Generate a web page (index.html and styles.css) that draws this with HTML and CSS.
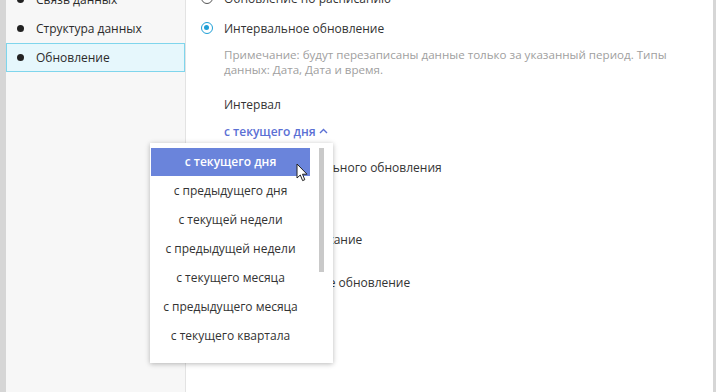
FILE: index.html
```html
<!DOCTYPE html>
<html lang="ru">
<head>
  <meta charset="UTF-8">
  <title>Обновление</title>
  <link rel="stylesheet" href="styles.css">
</head>
<body>
  <div class="frame">
    <div class="edge-left"></div>
    <aside class="sidebar">
      <ul class="nav">
        <li class="nav-item"><span class="dot"></span>Связь данных</li>
        <li class="nav-item"><span class="dot"></span>Структура данных</li>
        <li class="nav-item active"><span class="dot"></span>Обновление</li>
      </ul>
    </aside>
    <main class="content">
      <div class="radio-row"><span class="radio"></span>Обновление по расписанию</div>
      <div class="radio-row"><span class="radio checked"></span>Интервальное обновление</div>
      <div class="section">
        <p class="note">Примечание: будут перезаписаны данные только за указанный период. Типы данных: Дата, Дата и время.</p>
        <div class="label">Интервал</div>
        <div class="link">с текущего дня
          <svg class="chev" width="9" height="6" viewBox="0 0 9 6"><path d="M1 5 L4.5 1.5 L8 5" fill="none" stroke="#5b70d4" stroke-width="1.4"/></svg>
        </div>
        <div class="label sub">Порядок интервального обновления</div>
        <div class="opt opt-a">Задать расписание</div>
        <div class="opt opt-b">Интервальное обновление</div>
      </div>
    </main>
    <div class="edge-right"></div>

    <div class="dropdown">
      <ul class="options">
        <li class="option selected">с текущего дня</li>
        <li class="option">с предыдущего дня</li>
        <li class="option">с текущей недели</li>
        <li class="option">с предыдущей недели</li>
        <li class="option">с текущего месяца</li>
        <li class="option">с предыдущего месяца</li>
        <li class="option">с текущего квартала</li>
      </ul>
      <div class="scroll"><div class="thumb"></div></div>
      <svg class="cursor" width="13" height="20" viewBox="0 0 13 20">
        <path d="M1 1 L1 15 L4.3 12 L6.6 17.6 L8.8 16.7 L6.5 11.2 L11 11.2 Z" fill="#fff" stroke="#222" stroke-width="1" stroke-linejoin="round"/>
      </svg>
    </div>
  </div>
</body>
</html>
```

FILE: styles.css
```css
html, body {
  margin: 0;
  height: 100%;
  overflow: hidden;
}
body {
  font-family: 'Open Sans', 'Noto Sans', sans-serif;
  font-size: 12px;
  color: #333;
  background: #fff;
}
.frame {
  position: relative;
  display: flex;
  height: 392px;
}
.edge-left {
  width: 6px;
  background: #d6d6d6;
}
.edge-right {
  width: 3px;
  background: #d6d6d6;
}
.sidebar {
  width: 179px;
  background: #f7f7f7;
  border-right: 1px solid #e3e3e3;
}
.nav {
  list-style: none;
  margin: -15px 0 0;
  padding: 0;
}
.nav-item {
  box-sizing: border-box;
  display: flex;
  align-items: center;
  height: 29px;
  padding-left: 10px;
  border: 1px solid transparent;
  font-size: 12px;
  color: #2b2b2b;
}
.nav-item.active {
  background: #e6f7fc;
  border-color: #7fd5ec;
}
.dot {
  width: 7px;
  height: 7px;
  border-radius: 50%;
  background: #222;
  margin-right: 12px;
}
.content {
  flex: 1;
  padding: 0 0 0 15px;
}
.radio-row {
  display: flex;
  align-items: center;
  height: 30px;
}
.radio-row:first-child {
  margin-top: -17px;
}
.radio {
  box-sizing: border-box;
  width: 12px;
  height: 12px;
  border: 1.5px solid #555;
  border-radius: 50%;
  margin-right: 11px;
  position: relative;
}
.radio.checked {
  border-color: #1f9fd6;
}
.radio.checked::after {
  content: '';
  position: absolute;
  left: 2px;
  top: 2px;
  width: 5px;
  height: 5px;
  border-radius: 50%;
  background: #1f9fd6;
}
.section {
  padding-left: 23px;
}
.note {
  margin: 4px 0 0;
  width: 460px;
  font-size: 11.6px;
  line-height: 15px;
  color: #a0a0a0;
}
.label {
  margin-top: 19px;
  line-height: 18px;
}
.label.sub {
  margin-top: 18px;
}
.link {
  margin-top: 9px;
  line-height: 18px;
  color: #5b70d4;
  font-weight: 600;
  font-size: 12px;
}
.chev {
  vertical-align: 2px;
}
.opt {
  padding-left: 26px;
  line-height: 18px;
}
.opt-a {
  margin-top: 54px;
}
.opt-b {
  margin-top: 25px;
}
.dropdown {
  position: absolute;
  left: 150px;
  top: 143px;
  width: 183px;
  height: 220px;
  background: #fff;
  box-shadow: 0 1px 5px rgba(0, 0, 0, 0.28);
  display: flex;
}
.options {
  list-style: none;
  margin: 5px 0 0 1px;
  padding: 0;
  width: 159px;
}
.option {
  height: 29px;
  line-height: 29px;
  text-align: center;
  font-size: 12px;
  color: #333;
}
.option.selected {
  height: 28px;
  line-height: 28px;
  background: #6a84db;
  color: #fff;
  font-weight: 600;
}
.scroll {
  margin: 5px 0 0 9px;
  width: 5px;
}
.thumb {
  height: 124px;
  background: #c9c9c9;
}
.cursor {
  position: absolute;
  left: 146px;
  top: 20px;
}
```
